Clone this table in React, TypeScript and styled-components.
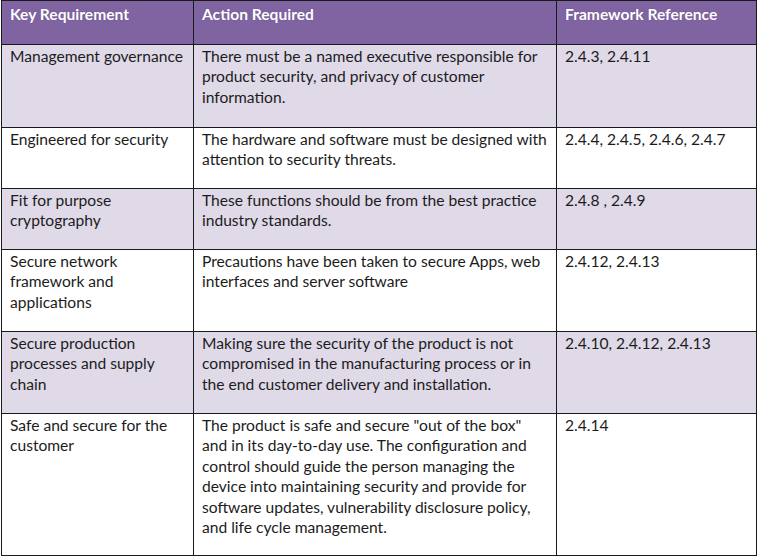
import React from "react";
import styled, { createGlobalStyle } from "styled-components";

const Global = createGlobalStyle`
  html, body { margin: 0; padding: 0; background: #ffffff; }
  body { font-family: Lato, "Open Sans", sans-serif; }
`;

const Page = styled.div`
  width: 759px;
  height: 557px;
  padding: 0 0 0 1px;
  box-sizing: border-box;
  background: #ffffff;
  overflow: hidden;
`;

const Table = styled.table`
  border-collapse: collapse;
  table-layout: fixed;
  width: 755px;
  font-family: Lato, "Open Sans", sans-serif;
  font-size: 15.6px;
  line-height: 20.5px;
  color: #1c1c1c;
`;

const Col = styled.col<{ $w: number }>`
  width: ${(p) => p.$w}px;
`;

const HeadRow = styled.tr`
  height: 44px;
`;

const HeadCell = styled.th`
  background: #8064a2;
  color: #ffffff;
  font-weight: 700;
  text-align: left;
  vertical-align: top;
  border: 1px solid #1a1a1a;
  padding: 3px 8px 0 8px;
  white-space: nowrap;
  text-shadow: 0 0 1px rgba(60, 40, 90, 0.4);
`;

const Row = styled.tr<{ $shaded: boolean; $h: number }>`
  background: ${(p) => (p.$shaded ? "#dfd9e8" : "#ffffff")};
  height: ${(p) => p.$h}px;
`;

const Cell = styled.td`
  vertical-align: top;
  border: 1px solid #1a1a1a;
  padding: 0.5px 8px 0 8px;
  white-space: nowrap;
`;

const Line = styled.div`
  height: 20.5px;
`;

type RowData = { req: string[]; action: string[]; ref: string; h: number };

const rows: RowData[] = [
  {
    req: ["Management governance"],
    action: [
      "There must be a named executive responsible for",
      "product security, and privacy of customer",
      "information.",
    ],
    ref: "2.4.3, 2.4.11",
    h: 83,
  },
  {
    req: ["Engineered for security"],
    action: [
      "The hardware and software must be designed with",
      "attention to security threats.",
    ],
    ref: "2.4.4, 2.4.5, 2.4.6, 2.4.7",
    h: 61,
  },
  {
    req: ["Fit for purpose", "cryptography"],
    action: [
      "These functions should be from the best practice",
      "industry standards.",
    ],
    ref: "2.4.8 , 2.4.9",
    h: 61,
  },
  {
    req: ["Secure network", "framework and", "applications"],
    action: [
      "Precautions have been taken to secure Apps, web",
      "interfaces and server software",
    ],
    ref: "2.4.12, 2.4.13",
    h: 82,
  },
  {
    req: ["Secure production", "processes and supply", "chain"],
    action: [
      "Making sure the security of the product is not",
      "compromised in the manufacturing process or in",
      "the end customer delivery and installation.",
    ],
    ref: "2.4.10, 2.4.12, 2.4.13",
    h: 82,
  },
  {
    req: ["Safe and secure for the", "customer"],
    action: [
      "The product is safe and secure \"out of the box\"",
      "and in its day-to-day use. The configuration and",
      "control should guide the person managing the",
      "device into maintaining security and provide for",
      "software updates, vulnerability disclosure policy,",
      "and life cycle management.",
    ],
    ref: "2.4.14",
    h: 142,
  },
];

const Lines = ({ items }: { items: string[] }) => (
  <>
    {items.map((t, i) => (
      <Line key={i}>{t}</Line>
    ))}
  </>
);

export default function App() {
  return (
    <Page>
      <Global />
      <Table>
        <colgroup>
          <Col $w={192} />
          <Col $w={363} />
          <Col $w={200} />
        </colgroup>
        <thead>
          <HeadRow>
            <HeadCell>Key Requirement</HeadCell>
            <HeadCell>Action Required</HeadCell>
            <HeadCell>Framework Reference</HeadCell>
          </HeadRow>
        </thead>
        <tbody>
          {rows.map((r, i) => (
            <Row key={i} $shaded={i % 2 === 0} $h={r.h}>
              <Cell>
                <Lines items={r.req} />
              </Cell>
              <Cell>
                <Lines items={r.action} />
              </Cell>
              <Cell>
                <Line>{r.ref}</Line>
              </Cell>
            </Row>
          ))}
        </tbody>
      </Table>
    </Page>
  );
}
